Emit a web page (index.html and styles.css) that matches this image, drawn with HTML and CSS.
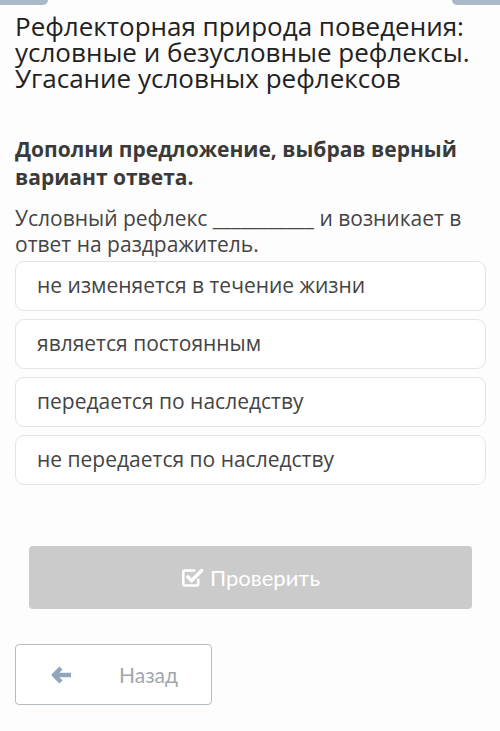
FILE: index.html
```html
<!DOCTYPE html>
<html lang="ru">
<head>
    <meta charset="UTF-8">
    <meta name="viewport" content="width=device-width, initial-scale=1.0">
    <title>Рефлекторная природа поведения</title>
    <link rel="stylesheet" href="styles.css">
</head>
<body>
    <div class="top-bar">
        <div class="top-btn top-btn-left"></div>
        <div class="top-btn top-btn-right"></div>
    </div>

    <div class="page">
        <h1 class="lesson-title">Рефлекторная природа поведения: условные и безусловные рефлексы. Угасание условных рефлексов</h1>

        <p class="task-title">Дополни предложение, выбрав верный вариант ответа.</p>

        <p class="task-text">Условный рефлекс ___________ и возникает в ответ на раздражитель.</p>

        <div class="answers">
            <div class="answer">не изменяется в течение жизни</div>
            <div class="answer">является постоянным</div>
            <div class="answer">передается по наследству</div>
            <div class="answer">не передается по наследству</div>
        </div>

        <div class="check-row">
            <button class="check-btn">
                <svg class="check-icon" width="23" height="23" viewBox="0 0 20 20">
                    <path d="M15 11v4.5a1.5 1.5 0 0 1-1.5 1.5h-10A1.5 1.5 0 0 1 2 15.5v-10A1.5 1.5 0 0 1 3.5 4h9" fill="none" stroke="#fff" stroke-width="2.2"/>
                    <path d="M6 9.5l3.2 3.2L18 4" fill="none" stroke="#fff" stroke-width="3" stroke-linecap="round" stroke-linejoin="round"/>
                </svg>
                Проверить
            </button>
        </div>

        <button class="back-btn">
            <svg class="back-icon" width="22" height="18" viewBox="0 0 22 18">
                <path d="M10 2L3 9l7 7M3 9h17" fill="none" stroke="#8fa6bb" stroke-width="4.5" stroke-linejoin="round"/>
            </svg>
            <span class="back-text">Назад</span>
        </button>
    </div>
</body>
</html>
```

FILE: styles.css
```css
body {
    margin: 0;
    background-color: #fdfdfd;
    font-family: "Open Sans", Arial, sans-serif;
    color: #333;
}

.top-bar {
    display: flex;
    justify-content: space-between;
    height: 5px;
}

.top-btn {
    width: 48px;
    height: 5px;
    background-color: #a9b9c7;
}

.top-btn-left {
    border-radius: 0 0 6px 0;
}

.top-btn-right {
    border-radius: 0 0 0 6px;
}

.page {
    padding: 0 14px 0 15px;
}

.lesson-title {
    font-size: 26px;
    font-weight: normal;
    line-height: 26px;
    color: #222;
    margin: 8px 0 0 0;
}

.task-title {
    font-size: 21px;
    font-weight: bold;
    line-height: 28px;
    color: #3a3a3a;
    margin: 44px 0 0 0;
}

.task-text {
    font-size: 21px;
    line-height: 26px;
    color: #444;
    margin: 14px 0 0 0;
}

.answers {
    display: flex;
    flex-direction: column;
    gap: 8px;
    margin-top: 4px;
}

.answer {
    height: 48px;
    border: 1px solid #e4e4e4;
    border-radius: 9px;
    background-color: #fff;
    padding-left: 21px;
    font-size: 21px;
    line-height: 46px;
    color: #444;
}

.check-row {
    padding: 0 14px;
    margin-top: 61px;
}

.check-btn {
    width: 100%;
    height: 63px;
    border: none;
    border-radius: 4px;
    background-color: #cbcbcb;
    color: #fff;
    font-family: Lato, Arial, sans-serif;
    font-size: 22px;
    display: flex;
    justify-content: center;
    align-items: center;
    gap: 6px;
}

.back-btn {
    margin-top: 35px;
    width: 197px;
    height: 61px;
    border: 1px solid #b5bdc4;
    border-radius: 4px;
    background-color: #fff;
    display: flex;
    align-items: center;
    padding: 0 0 0 35px;
    font-family: Lato, Arial, sans-serif;
    font-size: 21px;
    color: #a0a8ad;
}

.back-text {
    margin-left: 46px;
}
```
